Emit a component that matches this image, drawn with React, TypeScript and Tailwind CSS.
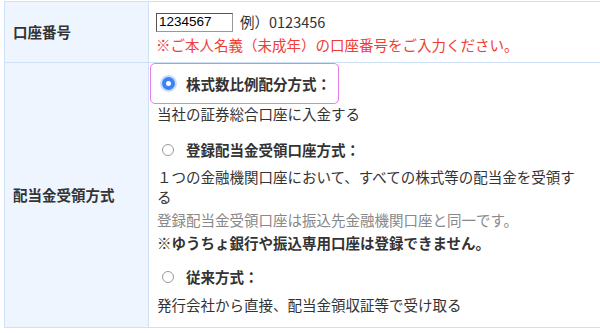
import React from 'react'

const jp = { fontFamily: '"Noto Sans CJK JP", "Noto Sans", sans-serif' }

const Radio = ({ checked }: { checked?: boolean }) =>
  checked ? (
    <span className="flex h-[13px] w-[13px] shrink-0 items-center justify-center rounded-full bg-[#3b82f6] ring-[2px] ring-[#c9dcfb]">
      <span className="h-[5px] w-[5px] rounded-full bg-white" />
    </span>
  ) : (
    <span className="h-[12px] w-[12px] shrink-0 rounded-full border border-[#9a9a9a] bg-white" />
  )

const App = () => {
  return (
    <div className="h-[333px] w-[600px] overflow-hidden bg-white pl-[4px] pt-[1px] text-[14.5px] text-[#333]" style={jp}>
      <div className="w-[620px] border-t border-l border-[#cfe1f6]">
        {/* 口座番号 */}
        <div className="flex h-[61px] border-b border-[#cfe1f6]">
          <div className="flex w-[144px] shrink-0 items-center border-r border-[#cfe1f6] bg-[#eef5fe] pl-[8px] font-bold">
            口座番号
          </div>
          <div className="flex flex-col pl-[7px] pt-[10px]">
            <div className="flex items-center gap-[7px] leading-[20px]">
              <span
                className="flex h-[19px] w-[77px] items-center border border-t-[#555] border-l-[#555] border-r-[#999] border-b-[#999] pl-[2px] text-[13.5px] text-black"
                style={{ fontFamily: '"Liberation Sans", Arial, sans-serif' }}
              >
                1234567
              </span>
              <span>例）0123456</span>
            </div>
            <div className="mt-[3px] leading-[20px] text-[#f03c36]">※ご本人名義（未成年）の口座番号をご入力ください。</div>
          </div>
        </div>

        {/* 配当金受領方式 */}
        <div className="flex h-[265px] border-b border-[#cfe1f6]">
          <div className="flex w-[144px] shrink-0 items-center border-r border-[#cfe1f6] bg-[#eef5fe] pl-[8px] font-bold">
            配当金受領方式
          </div>
          <div className="flex flex-col pl-[8px]">
            <div className="-ml-[7px] flex h-[41px] w-[189px] items-center gap-[11px] rounded-[5px] border-[1.5px] border-[#e57ee8] pl-[11px] font-bold">
              <Radio checked />
              <span>株式数比例配分方式：</span>
            </div>
            <div className="leading-[20px]">当社の証券総合口座に入金する</div>

            <div className="mt-[16px] flex items-center gap-[12px] pl-[5px] leading-[20px] font-bold">
              <Radio />
              <span>登録配当金受領口座方式：</span>
            </div>
            <div className="mt-[7px] w-[428px] leading-[19.5px]">
              １つの金融機関口座において、すべての株式等の配当金を受領する
            </div>
            <div className="mt-[4px] leading-[20px] text-[#888]">登録配当金受領口座は振込先金融機関口座と同一です。</div>
            <div className="mt-[3px] leading-[20px] font-bold">※ゆうちょ銀行や振込専用口座は登録できません。</div>

            <div className="mt-[14px] flex items-center gap-[12px] pl-[5px] leading-[20px] font-bold">
              <Radio />
              <span>従来方式：</span>
            </div>
            <div className="mt-[8px] leading-[20px]">発行会社から直接、配当金領収証等で受け取る</div>
          </div>
        </div>
      </div>
    </div>
  )
}

export default App
